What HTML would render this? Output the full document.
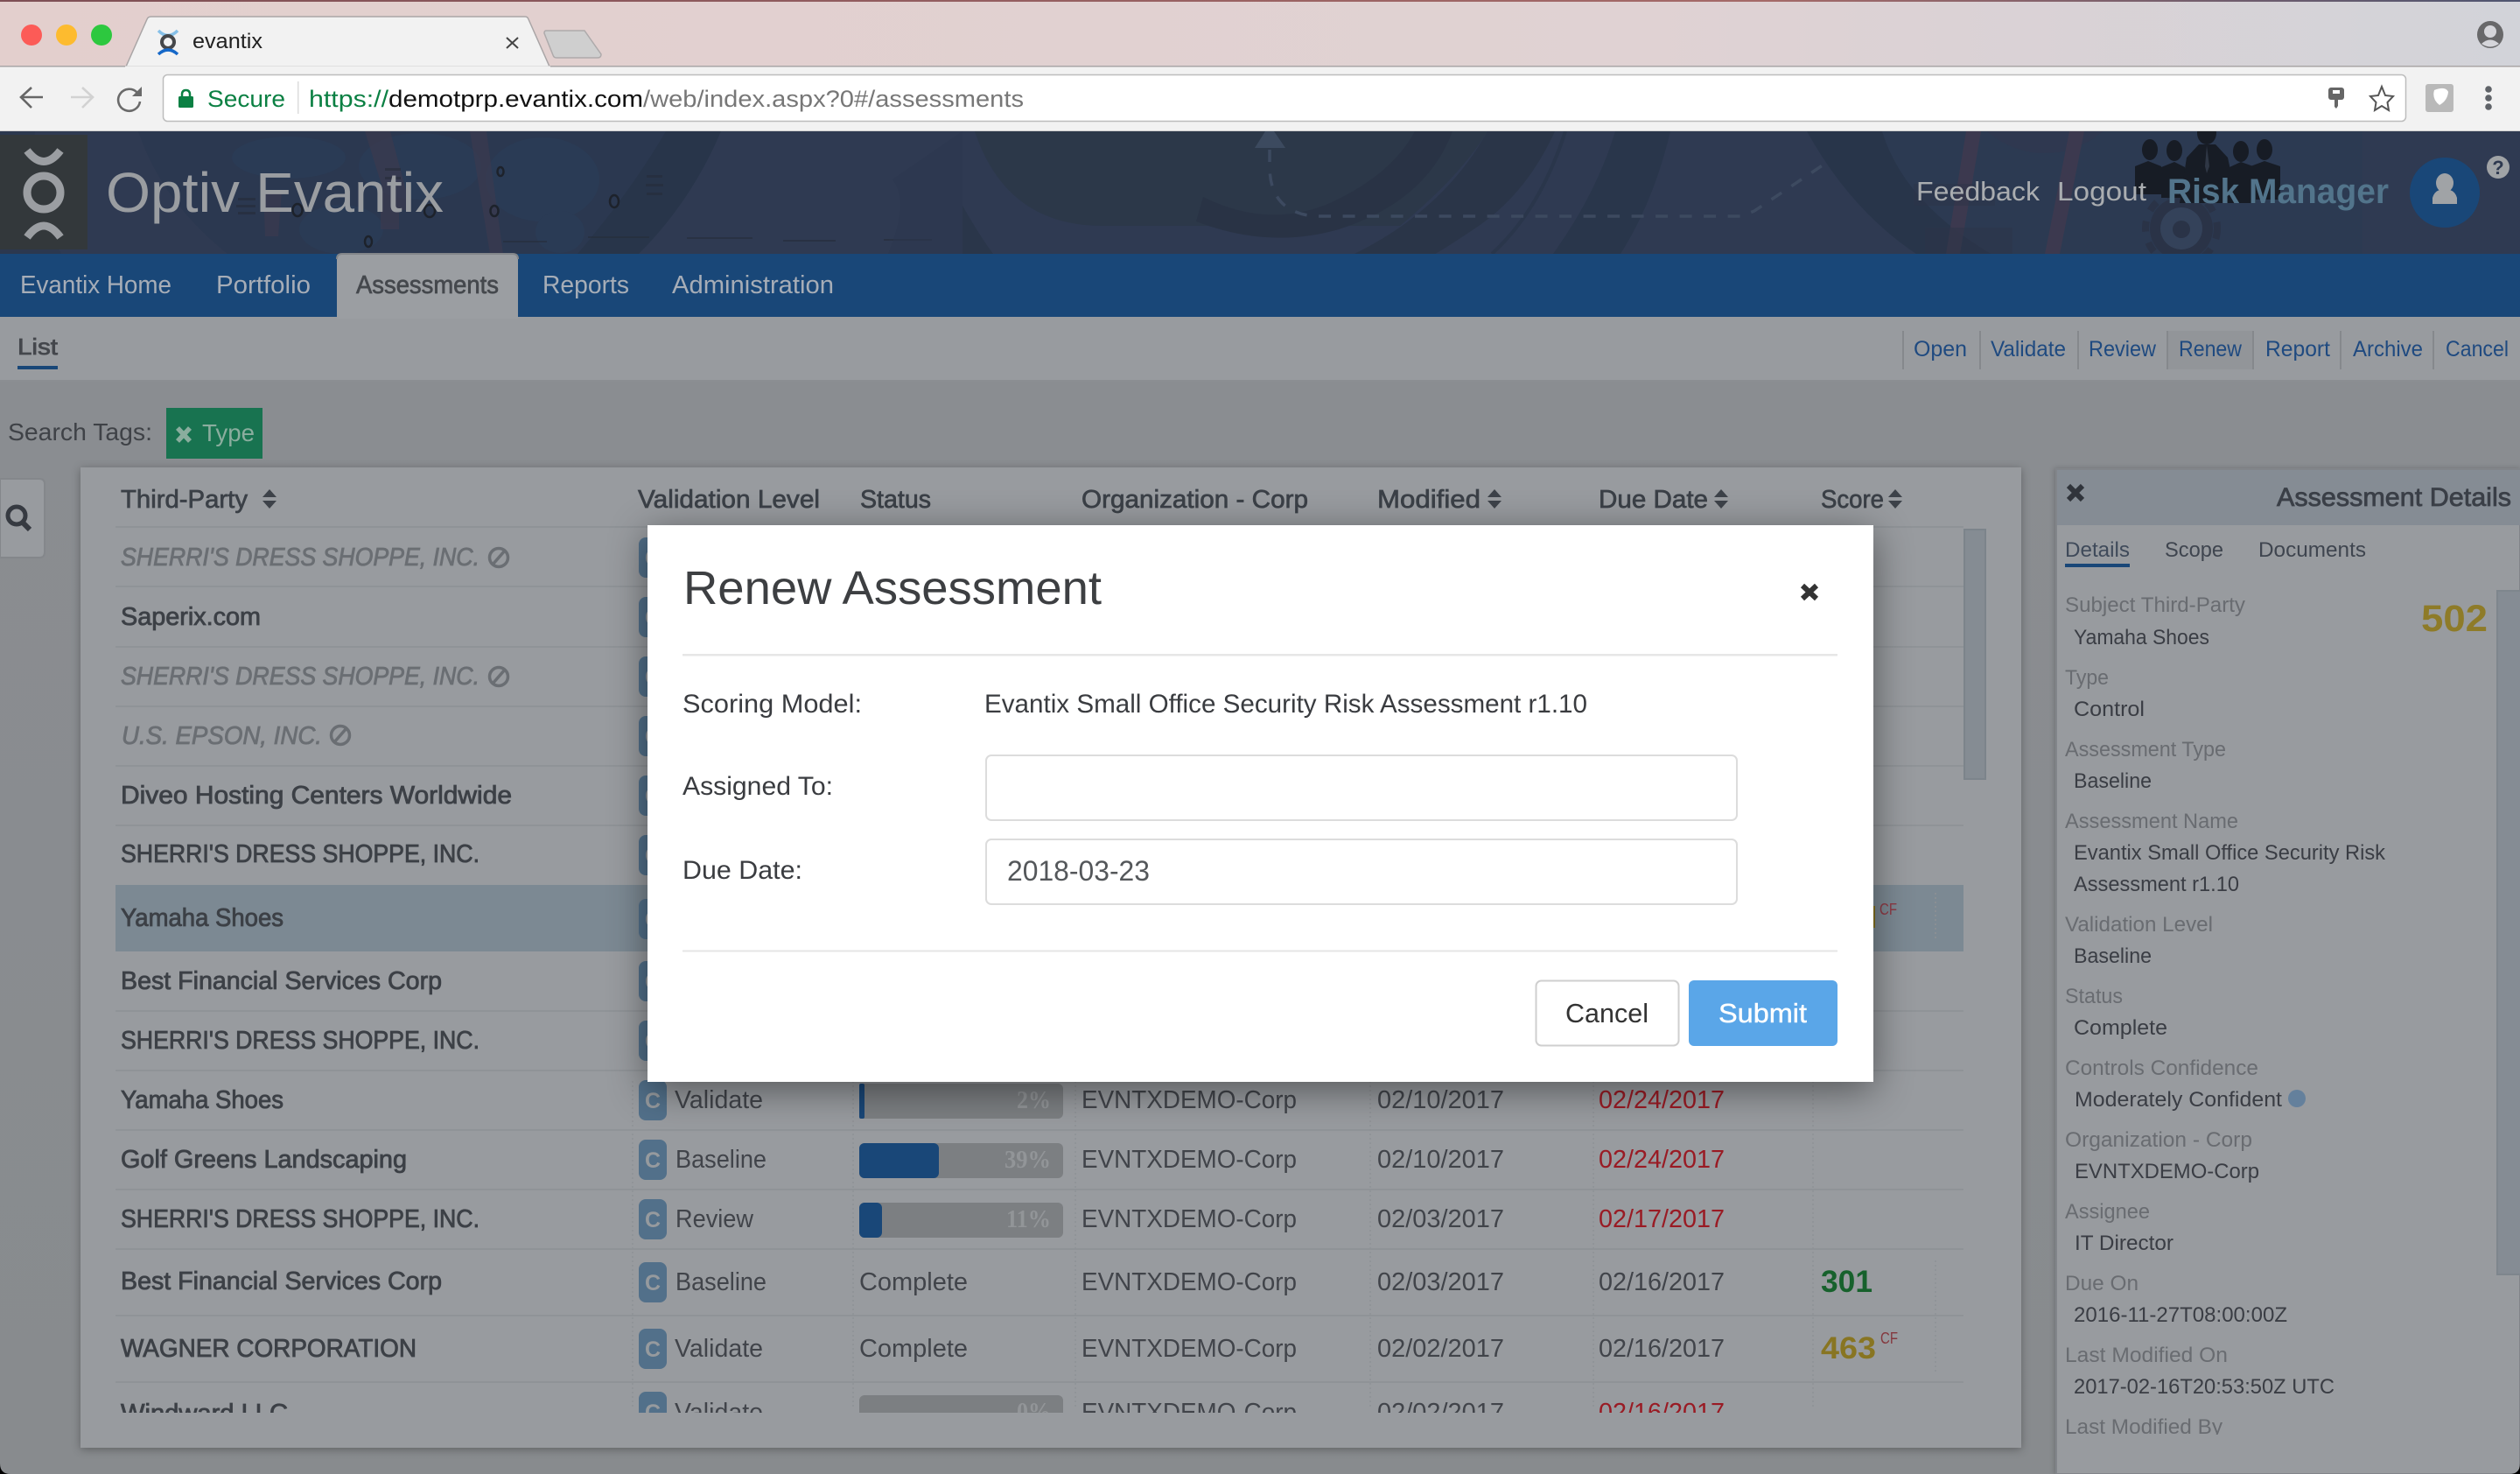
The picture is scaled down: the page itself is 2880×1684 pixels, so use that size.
<!DOCTYPE html>
<html><head><meta charset="utf-8"><title>evantix</title>
<style>
html,body{margin:0;padding:0;background:#8c8f93;width:2880px;height:1684px;overflow:hidden}
svg{display:block;position:absolute;left:0;top:0}
text{font-family:"Liberation Sans",sans-serif;font-size:29px;white-space:pre}
.nav{fill:#a6adb7;font-size:29px}
.act{fill:#1f4a80;font-size:25px}
.n{fill:#3c4046;stroke:#3c4046;stroke-width:.85px}
.i{fill:#6a6e73;stroke:#6a6e73;stroke-width:.85px;font-style:italic}
.h{fill:#3b4047;stroke:#3b4047;stroke-width:.7px}
.t{fill:#41444a}
.r{fill:#991b24}
.c{fill:#969a9e;font-size:25px;font-weight:bold;text-anchor:middle}
.p{fill:#929598;font-family:"Liberation Serif",serif;font-weight:bold;font-size:28px}
.l{fill:#696c71;font-size:24px}
.v{fill:#3a3d44;font-size:24px}
.m{fill:#3a3c40;font-size:30px}
.sep{stroke:#8f9397;stroke-width:2}
.dot{stroke:#8e9195;stroke-width:1.5;stroke-dasharray:2 3}
</style></head><body>
<svg xmlns="http://www.w3.org/2000/svg" width="2880" height="1684" viewBox="0 0 2880 1684">
<defs>
<linearGradient id="tb" x1="0" x2="1" y1="0" y2="0"><stop offset="0" stop-color="#e3cfcd"/><stop offset=".65" stop-color="#e0d2d3"/><stop offset="1" stop-color="#d2d3d9"/></linearGradient>
<linearGradient id="ts" x1="0" x2="1" y1="0" y2="0"><stop offset="0" stop-color="#7e4f55"/><stop offset=".7" stop-color="#a56a68"/><stop offset="1" stop-color="#4f5570"/></linearGradient>
<linearGradient id="bg" x1="0" x2="0" y1="0" y2="1"><stop offset="0" stop-color="#8a8d91"/><stop offset="1" stop-color="#888b8e"/></linearGradient>
<clipPath id="hd"><rect x="0" y="150" width="2880" height="140"/></clipPath>
<clipPath id="tbl"><rect x="92" y="534" width="2218" height="1080"/></clipPath>
<clipPath id="det"><rect x="2350" y="600" width="530" height="1039"/></clipPath>
</defs>

<!-- browser chrome -->
<rect width="2880" height="76" fill="url(#tb)"/>
<rect width="2880" height="2" fill="url(#ts)"/>
<rect y="75" width="2880" height="75" fill="#f2f2f2"/>
<rect y="75" width="2880" height="1.5" fill="#a9a5a6"/>
<rect y="149" width="2880" height="1.5" fill="#cfcfcf"/>
<circle cx="36" cy="40" r="12" fill="#fc5b57"/><circle cx="76" cy="40" r="12" fill="#fdbb2f"/><circle cx="116" cy="40" r="12" fill="#2dc83f"/>
<path d="M144 76 L168 22 Q169 19 173 19 H600 Q603 19 604 22 L628 76Z" fill="#f2f2f2" stroke="#a9a5a6" stroke-width="1.5"/>
<rect x="143" y="75.5" width="486" height="3" fill="#f2f2f2"/>
<path d="M181 35 Q192 46 203 35" fill="none" stroke="#86c0e8" stroke-width="3.5"/>
<circle cx="192" cy="48" r="7" fill="none" stroke="#45474a" stroke-width="4"/>
<path d="M181 62 Q192 52 203 62" fill="none" stroke="#1668c8" stroke-width="3.5"/>
<text x="220" y="55" style="font-size:24px;fill:#222" textLength="80" lengthAdjust="spacingAndGlyphs">evantix</text>
<path d="M579 43 L592 55 M592 43 L579 55" stroke="#444" stroke-width="2"/>
<path d="M624 35 H668 L687 62 Q687 66 683 66 H636 Q633 66 632 63 L622 38 Q622 35 624 35Z" fill="#cfcfcf" stroke="#aeaaab" stroke-width="1.5"/>
<path d="M49 111 H25 M36 100 L24 111 L36 123" fill="none" stroke="#666" stroke-width="2.600"/>
<path d="M105 111 H81 M94 100 L106 111 L94 123" fill="none" stroke="#d2d2d2" stroke-width="2.600"/>
<path d="M157 106 A12.500 12.500 0 1 0 160 116" fill="none" stroke="#6a6a6a" stroke-width="2.600"/>
<path d="M162 99 V110 H151Z" fill="#6a6a6a"/>
<rect x="186.500" y="85.500" width="2563" height="53" rx="5" fill="#fff" stroke="#bdbdbd" stroke-width="1.500"/>
<rect x="340" y="93" width="1.500" height="37" fill="#dcdcdc"/>
<path d="M208 111 V108 Q208 103 212.500 103 Q217 103 217 108 V111" fill="none" stroke="#0b8043" stroke-width="2.500"/>
<rect x="204" y="110" width="17" height="13" rx="1.500" fill="#0b8043"/>
<text x="237" y="122" style="font-size:27px;fill:#0b8043" textLength="89" lengthAdjust="spacingAndGlyphs">Secure</text>
<text x="353" y="122" style="font-size:27px;fill:#0b8043" textLength="91" lengthAdjust="spacingAndGlyphs">https://</text>
<text x="444" y="122" style="font-size:27px;fill:#111" textLength="291" lengthAdjust="spacingAndGlyphs">demotprp.evantix.com</text>
<text x="735" y="122" style="font-size:27px;fill:#777" textLength="435" lengthAdjust="spacingAndGlyphs">/web/index.aspx?0#/assessments</text>
<rect x="2661" y="100" width="18" height="14" rx="3" fill="#666"/><rect x="2666" y="103" width="8" height="4" fill="#fff"/><path d="M2668 113 H2672 V121 L2670 124 L2668 122Z" fill="#666"/>
<path d="M2722 99 L2726 109 L2735 110 L2728.500 117 L2730 126 L2722 121 L2714 126 L2715.500 117 L2709 110 L2718 109Z" fill="none" stroke="#555" stroke-width="2"/>
<rect x="2772" y="96" width="32" height="32" rx="3" fill="#b9b9b9"/><path d="M2782 103 Q2795 98 2798 105 Q2797 115 2788 120 Q2779 113 2782 103Z" fill="#fff"/>
<circle cx="2844" cy="102" r="3.800" fill="#5f6368"/><circle cx="2844" cy="112" r="3.800" fill="#5f6368"/><circle cx="2844" cy="122" r="3.800" fill="#5f6368"/>
<ellipse cx="2846" cy="39.500" rx="15" ry="15.500" fill="#68686a"/><circle cx="2846" cy="36" r="7" fill="#d5d5da"/><path d="M2836 50 Q2846 41 2856 50 Q2846 57 2836 50Z" fill="#d5d5da"/>

<!-- header -->
<rect y="150" width="2880" height="140" fill="#2f3a52"/>
<g clip-path="url(#hd)">
<!-- left globe -->
<path d="M158 150 Q185 230 260 290 H700 L761 150Z" fill="#2b3850"/>
<path d="M761 150 H824 Q790 230 730 290 H660 Q720 220 761 150Z" fill="#28354a"/>
<path d="M0 290 H70 Q30 220 40 150 H0Z" fill="#2c374e" opacity=".6"/>
<g fill="#2a3b55"><ellipse cx="330" cy="180" rx="65" ry="24"/><ellipse cx="480" cy="190" rx="70" ry="38"/><ellipse cx="390" cy="262" rx="48" ry="28"/><ellipse cx="620" cy="205" rx="65" ry="48"/><ellipse cx="640" cy="265" rx="28" ry="24"/></g>
<g fill="#3e3a4e" opacity=".6"><path d="M417 150 H446 L470 240 H445Z"/><path d="M537 150 H556 L575 290 H560Z"/><path d="M301 218 H322 L318 270 H303Z"/><path d="M435 212 H456 V262 H435Z"/></g>
<g fill="#252b38" opacity=".55"><rect x="272" y="226" width="20" height="3"/><rect x="270" y="234" width="22" height="3"/><rect x="272" y="242" width="20" height="3"/><rect x="440" y="192" width="18" height="3"/><rect x="440" y="202" width="18" height="3"/><rect x="739" y="200" width="18" height="3"/><rect x="738" y="210" width="20" height="3"/><rect x="739" y="220" width="18" height="3"/><rect x="575" y="275" width="50" height="2"/><rect x="672" y="270" width="70" height="2"/><rect x="785" y="271" width="75" height="2"/><rect x="895" y="274" width="60" height="2"/><rect x="1010" y="273" width="55" height="2"/></g>
<path d="M1015 290 Q1040 230 1020 205 L1100 150 V290Z" fill="#2b364d" opacity=".5"/>
<!-- centre shapes -->
<path d="M1114 150 Q1150 258 1260 258 H1600 Q1670 200 1700 150Z" fill="#2c3849"/>
<path d="M1375 225 Q1450 262 1520 232 Q1590 200 1617 150 H1660 Q1630 230 1530 262 Q1450 285 1367 253Z" fill="#293345"/>
<path d="M1100 235 Q1120 270 1135 290 H1100Z" fill="#2a364a"/>
<path d="M1700 150 H1777 Q1745 220 1690 258 Q1650 285 1640 290 H1548 Q1650 240 1700 150Z" fill="#2a3548"/>
<path d="M1846 150 H1909 Q1890 230 1852 290 H1775 Q1825 220 1846 150Z" fill="#29364b"/>
<path d="M1789 150 Q1760 240 1705 290" fill="none" stroke="#2a364b" stroke-width="4"/>
<path d="M1434 169 L1446 150 H1456 L1469 169Z" fill="#3c4a5f"/>
<path d="M1451 171 V190 Q1451 222 1470 236 Q1485 247 1508 247 H1990 L2005 241 L2129 158" fill="none" stroke="#3d4a60" stroke-width="3.500" stroke-dasharray="14 13.500"/>
<!-- right ring -->
<path d="M2065 150 H2151 Q2175 230 2275 290 H2190 Q2115 240 2065 150Z" fill="#28354a"/>
<path d="M2151 150 H2700 V290 H2275 Q2175 230 2151 150Z" fill="#2a3a52" opacity=".55"/>
<circle cx="2337" cy="75" r="100" fill="#2f3850"/>
<g fill="#41394f" opacity=".75"><path d="M2247 150 H2264 L2240 290 H2224Z"/><path d="M2365 150 H2382 L2354 290 H2337Z"/></g>
<path d="M2187 210 H2280 V235 H2187Z M2200 260 H2300 V290 H2200Z" fill="#2b3347" opacity=".5"/>
<!-- gear -->
<circle cx="2493" cy="261" r="36" fill="#2a3347"/>
<circle cx="2493" cy="261" r="41" fill="none" stroke="#2a3347" stroke-width="8" stroke-dasharray="12 13"/>
<circle cx="2493" cy="261" r="24" fill="#34425a"/>
<circle cx="2493" cy="262" r="10" fill="#2a3347"/>
<!-- people -->
<g fill="#171c25">
<ellipse cx="2457" cy="171" rx="9" ry="12"/><path d="M2440 190 L2455 184 L2470 190 V222 H2440Z"/>
<ellipse cx="2485" cy="172" rx="9" ry="12"/><path d="M2470 191 L2485 185 L2497 191 V226 H2470Z"/>
<ellipse cx="2522" cy="152" rx="11" ry="13"/><path d="M2491 232 L2499 180 L2513 165 H2532 L2546 180 L2557 232Z"/>
<ellipse cx="2561" cy="173" rx="9" ry="12"/><path d="M2548 191 L2561 185 L2578 191 V232 H2548Z"/>
<ellipse cx="2588" cy="171" rx="9" ry="12"/><path d="M2572 190 L2588 184 L2606 190 V228 H2572Z"/>
</g>
<path d="M2522 166 L2520 190 L2522 198 L2525 190Z" fill="#2f3745"/>
</g>
<rect x="0" y="154" width="100" height="131" fill="#33383b"/>
<path d="M31 172 Q50 197 69 172" fill="none" stroke="#9b9ea2" stroke-width="9"/>
<circle cx="50" cy="220" r="19" fill="none" stroke="#9b9ea2" stroke-width="9"/>
<path d="M31 271 Q50 245 69 271" fill="none" stroke="#9b9ea2" stroke-width="9"/>
<g fill="none" stroke="#1d222b" stroke-width="2.500"><ellipse cx="572" cy="196" rx="3.500" ry="5"/><ellipse cx="702" cy="230" rx="5" ry="7"/><ellipse cx="565" cy="241" rx="4.500" ry="6"/><ellipse cx="340" cy="240" rx="5.500" ry="7"/><ellipse cx="491" cy="241" rx="6" ry="7"/><ellipse cx="421" cy="276" rx="4" ry="6"/></g>
<text x="121" y="242" style="font-size:64px;fill:#9a9da1" textLength="386" lengthAdjust="spacingAndGlyphs">Optiv Evantix</text>
<text x="2190" y="229" style="font-size:31px;fill:#aaadb0" textLength="141" lengthAdjust="spacingAndGlyphs">Feedback</text>
<text x="2351" y="229" style="font-size:31px;fill:#aaadb0" textLength="102" lengthAdjust="spacingAndGlyphs">Logout</text>
<text x="2477" y="232" style="font-size:40px;fill:#52748b;font-weight:bold" textLength="253" lengthAdjust="spacingAndGlyphs">Risk Manager</text>
<ellipse cx="2794" cy="220" rx="40" ry="40" fill="#194778"/>
<ellipse cx="2794" cy="209" rx="10" ry="11" fill="#a0a3a6"/><path d="M2780 233 V226 Q2782 219 2788 217 Q2794 222 2800 217 Q2806 219 2808 226 V233 Z" fill="#a0a3a6"/>
<circle cx="2855" cy="191" r="13" fill="#a0a3a6"/>
<text x="2855" y="199" text-anchor="middle" style="font-size:22px;font-weight:bold;fill:#2e3950">?</text>

<!-- nav -->
<rect y="290" width="2880" height="72" fill="#194778"/>
<text class="nav" x="23" y="335" textLength="173" lengthAdjust="spacingAndGlyphs">Evantix Home</text>
<text class="nav" x="247" y="335" textLength="108" lengthAdjust="spacingAndGlyphs">Portfolio</text>
<path d="M385 364 V296 Q385 290 391 290 H586 Q592 290 592 296 V364Z" fill="#9b9ea2"/>
<path d="M385 296 Q385 290 391 290 H586 Q592 290 592 296" fill="none" stroke="#83868a" stroke-width="2"/>
<text x="407" y="335" style="font-size:29px;fill:#45484d;stroke:#45484d;stroke-width:.7" textLength="163" lengthAdjust="spacingAndGlyphs">Assessments</text>
<text class="nav" x="620" y="335" textLength="99" lengthAdjust="spacingAndGlyphs">Reports</text>
<text class="nav" x="768" y="335" textLength="185" lengthAdjust="spacingAndGlyphs">Administration</text>

<!-- sub nav -->
<rect y="362" width="2880" height="72" fill="#989b9f"/>
<rect x="385" y="362" width="207" height="2" fill="#9b9ea2"/>
<rect y="434" width="2880" height="2" fill="#8b8e92"/>
<rect y="436" width="2880" height="1248" fill="url(#bg)"/>
<text x="20" y="405" style="font-size:26px;fill:#44474c;stroke:#44474c;stroke-width:.8" textLength="46" lengthAdjust="spacingAndGlyphs">List</text>
<rect x="20" y="418" width="46" height="4" fill="#194778"/>
<rect x="2477" y="378" width="98" height="44" fill="#929599"/>
<g fill="#85888c"><rect x="2174" y="378" width="2" height="44"/><rect x="2262" y="378" width="2" height="44"/><rect x="2374" y="378" width="2" height="44"/><rect x="2476" y="378" width="2" height="44"/><rect x="2574" y="378" width="2" height="44"/><rect x="2674" y="378" width="2" height="44"/><rect x="2780" y="378" width="2" height="44"/></g>
<text class="act" x="2187" y="407" textLength="61" lengthAdjust="spacingAndGlyphs">Open</text>
<text class="act" x="2275" y="407" textLength="86" lengthAdjust="spacingAndGlyphs">Validate</text>
<text class="act" x="2387" y="407" textLength="77" lengthAdjust="spacingAndGlyphs">Review</text>
<text class="act" x="2490" y="407" textLength="72" lengthAdjust="spacingAndGlyphs">Renew</text>
<text class="act" x="2589" y="407" textLength="74" lengthAdjust="spacingAndGlyphs">Report</text>
<text class="act" x="2689" y="407" textLength="80" lengthAdjust="spacingAndGlyphs">Archive</text>
<text class="act" x="2795" y="407" textLength="72" lengthAdjust="spacingAndGlyphs">Cancel</text>

<!-- search tags -->
<text x="9" y="503" style="font-size:28px;fill:#3f4247" textLength="165" lengthAdjust="spacingAndGlyphs">Search Tags:</text>
<rect x="190" y="466" width="110" height="58" fill="#187350"/>
<path d="M203 489 L217 504 M217 489 L203 504" stroke="#8aad9e" stroke-width="5.500"/>
<text x="231" y="504" style="font-size:28px;fill:#8aad9e" textLength="60" lengthAdjust="spacingAndGlyphs">Type</text>
<path d="M0 547 H45 Q51 547 51 553 V631 Q51 637 45 637 H0Z" fill="#989b9f" stroke="#84878b" stroke-width="2"/>
<circle cx="19" cy="589" r="10" fill="none" stroke="#363a41" stroke-width="5"/><path d="M26 597 L34 605" stroke="#363a41" stroke-width="6"/>

<!-- main panel -->
<rect x="92" y="534" width="2218" height="1120" fill="#989b9f" style="filter:drop-shadow(0 2px 5px rgba(0,0,0,.3))"/>
<text class="h" x="138" y="580" textLength="145" lengthAdjust="spacingAndGlyphs">Third-Party</text>
<path d="M300 568 L308 559 L316 568Z M300 572 L308 581 L316 572Z" fill="#3d4249"/>
<text class="h" x="729" y="580" textLength="208" lengthAdjust="spacingAndGlyphs">Validation Level</text>
<text class="h" x="983" y="580" textLength="81" lengthAdjust="spacingAndGlyphs">Status</text>
<text class="h" x="1236" y="580" textLength="259" lengthAdjust="spacingAndGlyphs">Organization - Corp</text>
<text class="h" x="1574" y="580" textLength="118" lengthAdjust="spacingAndGlyphs">Modified</text>
<path d="M1700 568 L1708 559 L1716 568Z M1700 572 L1708 581 L1716 572Z" fill="#3d4249"/>
<text class="h" x="1827" y="580" textLength="125" lengthAdjust="spacingAndGlyphs">Due Date</text>
<path d="M1959 568 L1967 559 L1975 568Z M1959 572 L1967 581 L1975 572Z" fill="#3d4249"/>
<text class="h" x="2081" y="580" textLength="72" lengthAdjust="spacingAndGlyphs">Score</text>
<path d="M2158 568 L2166 559 L2174 568Z M2158 572 L2166 581 L2174 572Z" fill="#3d4249"/>

<g class="sep"><line x1="132" x2="2244" y1="602" y2="602"/><line x1="132" x2="2244" y1="670" y2="670"/><line x1="132" x2="2244" y1="739" y2="739"/><line x1="132" x2="2244" y1="807" y2="807"/><line x1="132" x2="2244" y1="875" y2="875"/><line x1="132" x2="2244" y1="943" y2="943"/><line x1="132" x2="2244" y1="1155" y2="1155"/><line x1="132" x2="2244" y1="1223" y2="1223"/><line x1="132" x2="2244" y1="1291" y2="1291"/><line x1="132" x2="2244" y1="1359" y2="1359"/><line x1="132" x2="2244" y1="1427" y2="1427"/><line x1="132" x2="2244" y1="1503" y2="1503"/><line x1="132" x2="2244" y1="1579" y2="1579"/></g>
<rect x="132" y="1011" width="2112" height="76" fill="#7c8993"/>
<rect x="2245" y="605" width="24" height="285" fill="#858c93" stroke="#7c848b" stroke-width="2"/>

<g clip-path="url(#tbl)">
<g class="dot"><line x1="723" x2="723" y1="1235" y2="1610"/><line x1="975" x2="975" y1="1235" y2="1610"/><line x1="1229" x2="1229" y1="1235" y2="1610"/><line x1="1566" x2="1566" y1="1235" y2="1610"/><line x1="1821" x2="1821" y1="1235" y2="1610"/><line x1="2072" x2="2072" y1="1235" y2="1610"/><line x1="2212" x2="2212" y1="1440" y2="1570"/><line x1="2212" x2="2212" y1="1020" y2="1075"/></g>
<g fill="#52708a">
<rect x="730" y="614" width="32" height="46" rx="8"/><rect x="730" y="682" width="32" height="46" rx="8"/><rect x="730" y="750" width="32" height="46" rx="8"/><rect x="730" y="818" width="32" height="46" rx="8"/><rect x="730" y="886" width="32" height="46" rx="8"/><rect x="730" y="954" width="32" height="46" rx="8"/><rect x="730" y="1027" width="32" height="46" rx="8"/><rect x="730" y="1098" width="32" height="46" rx="8"/><rect x="730" y="1166" width="32" height="46" rx="8"/><rect x="730" y="1234" width="32" height="46" rx="8"/><rect x="730" y="1302" width="32" height="46" rx="8"/><rect x="730" y="1370" width="32" height="46" rx="8"/><rect x="730" y="1442" width="32" height="46" rx="8"/><rect x="730" y="1518" width="32" height="46" rx="8"/><rect x="730" y="1590" width="32" height="46" rx="8"/>
</g>
<text class="c" x="746" y="646">C</text><text class="c" x="746" y="714">C</text><text class="c" x="746" y="782">C</text><text class="c" x="746" y="850">C</text><text class="c" x="746" y="918">C</text><text class="c" x="746" y="986">C</text><text class="c" x="746" y="1059">C</text><text class="c" x="746" y="1130">C</text><text class="c" x="746" y="1198">C</text><text class="c" x="746" y="1266">C</text><text class="c" x="746" y="1334">C</text><text class="c" x="746" y="1402">C</text><text class="c" x="746" y="1474">C</text><text class="c" x="746" y="1550">C</text><text class="c" x="746" y="1622">C</text>

<!-- names -->
<text class="i" x="138" y="646" textLength="410" lengthAdjust="spacingAndGlyphs">SHERRI'S DRESS SHOPPE, INC.</text>
<text class="n" x="138" y="714" textLength="160" lengthAdjust="spacingAndGlyphs">Saperix.com</text>
<text class="i" x="138" y="782" textLength="410" lengthAdjust="spacingAndGlyphs">SHERRI'S DRESS SHOPPE, INC.</text>
<text class="i" x="139" y="850" textLength="229" lengthAdjust="spacingAndGlyphs">U.S. EPSON, INC.</text>
<text class="n" x="138" y="918" textLength="447" lengthAdjust="spacingAndGlyphs">Diveo Hosting Centers Worldwide</text>
<text class="n" x="138" y="985" textLength="410" lengthAdjust="spacingAndGlyphs">SHERRI'S DRESS SHOPPE, INC.</text>
<text class="n" x="138" y="1058" textLength="186" lengthAdjust="spacingAndGlyphs">Yamaha Shoes</text>
<text class="n" x="138" y="1130" textLength="367" lengthAdjust="spacingAndGlyphs">Best Financial Services Corp</text>
<text class="n" x="138" y="1198" textLength="410" lengthAdjust="spacingAndGlyphs">SHERRI'S DRESS SHOPPE, INC.</text>
<text class="n" x="138" y="1266" textLength="186" lengthAdjust="spacingAndGlyphs">Yamaha Shoes</text>
<text class="n" x="138" y="1334" textLength="327" lengthAdjust="spacingAndGlyphs">Golf Greens Landscaping</text>
<text class="n" x="138" y="1402" textLength="410" lengthAdjust="spacingAndGlyphs">SHERRI'S DRESS SHOPPE, INC.</text>
<text class="n" x="138" y="1473" textLength="367" lengthAdjust="spacingAndGlyphs">Best Financial Services Corp</text>
<text class="n" x="138" y="1550" textLength="338" lengthAdjust="spacingAndGlyphs">WAGNER CORPORATION</text>
<text class="n" x="138" y="1624" textLength="191" lengthAdjust="spacingAndGlyphs">Windward LLC</text>
<g fill="none" stroke="#6a6e73" stroke-width="3.500">
<circle cx="570" cy="637" r="10.500"/><path d="M563 645 L577 629"/>
<circle cx="570" cy="773" r="10.500"/><path d="M563 781 L577 765"/>
<circle cx="389" cy="840" r="10.500"/><path d="M382 848 L396 832"/>
</g>

<!-- rows bottom -->
<g fill="#7c7f82"><rect x="982" y="1238" width="233" height="40" rx="6"/><rect x="982" y="1306" width="233" height="40" rx="6"/><rect x="982" y="1374" width="233" height="40" rx="6"/><rect x="982" y="1594" width="233" height="40" rx="6"/></g>
<g fill="#194778"><rect x="982" y="1238" width="6" height="40" rx="2"/><rect x="982" y="1306" width="91" height="40" rx="6"/><rect x="982" y="1374" width="26" height="40" rx="6"/></g>
<text class="p" x="1162" y="1266" textLength="39" lengthAdjust="spacingAndGlyphs">2%</text>
<text class="p" x="1148" y="1334" textLength="53" lengthAdjust="spacingAndGlyphs">39%</text>
<text class="p" x="1150" y="1402" textLength="51" lengthAdjust="spacingAndGlyphs">11%</text>
<text class="p" x="1162" y="1622" textLength="39" lengthAdjust="spacingAndGlyphs">0%</text>

<text class="t" x="771" y="1266" textLength="101" lengthAdjust="spacingAndGlyphs">Validate</text>
<text class="t" x="772" y="1334" textLength="104" lengthAdjust="spacingAndGlyphs">Baseline</text>
<text class="t" x="772" y="1402" textLength="89" lengthAdjust="spacingAndGlyphs">Review</text>
<text class="t" x="772" y="1474" textLength="104" lengthAdjust="spacingAndGlyphs">Baseline</text>
<text class="t" x="771" y="1550" textLength="101" lengthAdjust="spacingAndGlyphs">Validate</text>
<text class="t" x="771" y="1623" textLength="101" lengthAdjust="spacingAndGlyphs">Validate</text>
<text class="t" x="982" y="1474" textLength="124" lengthAdjust="spacingAndGlyphs">Complete</text>
<text class="t" x="982" y="1550" textLength="124" lengthAdjust="spacingAndGlyphs">Complete</text>

<text class="t" x="1236" y="1266" textLength="246" lengthAdjust="spacingAndGlyphs">EVNTXDEMO-Corp</text>
<text class="t" x="1236" y="1334" textLength="246" lengthAdjust="spacingAndGlyphs">EVNTXDEMO-Corp</text>
<text class="t" x="1236" y="1402" textLength="246" lengthAdjust="spacingAndGlyphs">EVNTXDEMO-Corp</text>
<text class="t" x="1236" y="1474" textLength="246" lengthAdjust="spacingAndGlyphs">EVNTXDEMO-Corp</text>
<text class="t" x="1236" y="1550" textLength="246" lengthAdjust="spacingAndGlyphs">EVNTXDEMO-Corp</text>
<text class="t" x="1236" y="1623" textLength="246" lengthAdjust="spacingAndGlyphs">EVNTXDEMO-Corp</text>

<text class="t" x="1574" y="1266" textLength="145" lengthAdjust="spacingAndGlyphs">02/10/2017</text>
<text class="t" x="1574" y="1334" textLength="145" lengthAdjust="spacingAndGlyphs">02/10/2017</text>
<text class="t" x="1574" y="1402" textLength="145" lengthAdjust="spacingAndGlyphs">02/03/2017</text>
<text class="t" x="1574" y="1474" textLength="145" lengthAdjust="spacingAndGlyphs">02/03/2017</text>
<text class="t" x="1574" y="1550" textLength="145" lengthAdjust="spacingAndGlyphs">02/02/2017</text>
<text class="t" x="1574" y="1623" textLength="145" lengthAdjust="spacingAndGlyphs">02/02/2017</text>

<text class="r" x="1827" y="1266" textLength="144" lengthAdjust="spacingAndGlyphs">02/24/2017</text>
<text class="r" x="1827" y="1334" textLength="144" lengthAdjust="spacingAndGlyphs">02/24/2017</text>
<text class="r" x="1827" y="1402" textLength="144" lengthAdjust="spacingAndGlyphs">02/17/2017</text>
<text class="t" x="1827" y="1474" textLength="144" lengthAdjust="spacingAndGlyphs">02/16/2017</text>
<text class="t" x="1827" y="1550" textLength="144" lengthAdjust="spacingAndGlyphs">02/16/2017</text>
<text class="r" x="1827" y="1623" textLength="144" lengthAdjust="spacingAndGlyphs">02/16/2017</text>
</g>

<text x="2081" y="1476" style="font-size:35px;font-weight:bold;fill:#17612c" textLength="59" lengthAdjust="spacingAndGlyphs">301</text>
<text x="2081" y="1552" style="font-size:35px;font-weight:bold;fill:#887522" textLength="63" lengthAdjust="spacingAndGlyphs">463</text>
<text x="2149" y="1535" style="font-size:18px;fill:#84383e" textLength="20" lengthAdjust="spacingAndGlyphs">CF</text>
<rect x="2136" y="1035" width="7" height="25" fill="#887522"/>
<text x="2148" y="1045" style="font-size:18px;fill:#8f3a44" textLength="20" lengthAdjust="spacingAndGlyphs">CF</text>

<!-- details panel -->
<rect x="2350" y="536" width="530" height="1148" fill="#989b9f" stroke="#82858a" stroke-width="2" style="filter:drop-shadow(-1px 0 3px rgba(0,0,0,.2))"/>
<rect x="2351" y="537" width="529" height="63" fill="#858c94"/>
<path d="M2364 555 L2380 571 M2380 555 L2364 571" stroke="#30343b" stroke-width="6"/>
<text x="2602" y="578" style="font-size:30px;fill:#3a3f47;stroke:#3a3f47;stroke-width:.8" textLength="268" lengthAdjust="spacingAndGlyphs">Assessment Details</text>
<text x="2360" y="636" style="font-size:24px;fill:#3f4a5a" textLength="74" lengthAdjust="spacingAndGlyphs">Details</text>
<text x="2474" y="636" style="font-size:24px;fill:#3f454f" textLength="67" lengthAdjust="spacingAndGlyphs">Scope</text>
<text x="2581" y="636" style="font-size:24px;fill:#3f454f" textLength="123" lengthAdjust="spacingAndGlyphs">Documents</text>
<rect x="2360" y="644" width="74" height="4" fill="#194778"/>
<rect x="2854" y="675" width="28" height="781" fill="#858c94" stroke="#7e868d" stroke-width="2"/>
<text x="2767" y="721" style="font-size:43px;font-weight:bold;fill:#8e7b28" textLength="76" lengthAdjust="spacingAndGlyphs">502</text>
<g clip-path="url(#det)">
<text class="l" x="2360" y="699" textLength="206" lengthAdjust="spacingAndGlyphs">Subject Third-Party</text>
<text class="v" x="2370" y="736" textLength="155" lengthAdjust="spacingAndGlyphs">Yamaha Shoes</text>
<text class="l" x="2360" y="782" textLength="50" lengthAdjust="spacingAndGlyphs">Type</text>
<text class="v" x="2370" y="818" textLength="81" lengthAdjust="spacingAndGlyphs">Control</text>
<text class="l" x="2360" y="864" textLength="184" lengthAdjust="spacingAndGlyphs">Assessment Type</text>
<text class="v" x="2370" y="900" textLength="89" lengthAdjust="spacingAndGlyphs">Baseline</text>
<text class="l" x="2360" y="946" textLength="198" lengthAdjust="spacingAndGlyphs">Assessment Name</text>
<text class="v" x="2370" y="982" textLength="356" lengthAdjust="spacingAndGlyphs">Evantix Small Office Security Risk</text>
<text class="v" x="2370" y="1018" textLength="189" lengthAdjust="spacingAndGlyphs">Assessment r1.10</text>
<text class="l" x="2360" y="1064" textLength="169" lengthAdjust="spacingAndGlyphs">Validation Level</text>
<text class="v" x="2370" y="1100" textLength="89" lengthAdjust="spacingAndGlyphs">Baseline</text>
<text class="l" x="2360" y="1146" textLength="66" lengthAdjust="spacingAndGlyphs">Status</text>
<text class="v" x="2370" y="1182" textLength="107" lengthAdjust="spacingAndGlyphs">Complete</text>
<text class="l" x="2360" y="1228" textLength="221" lengthAdjust="spacingAndGlyphs">Controls Confidence</text>
<text class="v" x="2371" y="1264" textLength="237" lengthAdjust="spacingAndGlyphs">Moderately Confident</text>
<circle cx="2625" cy="1255" r="10" fill="#64809c"/>
<text class="l" x="2360" y="1310" textLength="214" lengthAdjust="spacingAndGlyphs">Organization - Corp</text>
<text class="v" x="2371" y="1346" textLength="211" lengthAdjust="spacingAndGlyphs">EVNTXDEMO-Corp</text>
<text class="l" x="2360" y="1392" textLength="97" lengthAdjust="spacingAndGlyphs">Assignee</text>
<text class="v" x="2371" y="1428" textLength="113" lengthAdjust="spacingAndGlyphs">IT Director</text>
<text class="l" x="2360" y="1474" textLength="84" lengthAdjust="spacingAndGlyphs">Due On</text>
<text class="v" x="2370" y="1510" textLength="244" lengthAdjust="spacingAndGlyphs">2016-11-27T08:00:00Z</text>
<text class="l" x="2360" y="1556" textLength="186" lengthAdjust="spacingAndGlyphs">Last Modified On</text>
<text class="v" x="2370" y="1592" textLength="298" lengthAdjust="spacingAndGlyphs">2017-02-16T20:53:50Z UTC</text>
<text class="l" x="2360" y="1638" textLength="180" lengthAdjust="spacingAndGlyphs">Last Modified By</text>
</g>

<!-- window corners -->
<path d="M0 1672 Q0 1684 12 1684 H0Z M2880 1672 Q2880 1684 2868 1684 H2880Z" fill="#000"/>

<!-- modal -->
<rect x="740" y="600" width="1401" height="636" fill="#fff" style="filter:drop-shadow(0 9px 22px rgba(0,0,0,.45))"/>
<text x="781" y="690" style="font-size:54px;fill:#3d3f42" textLength="478" lengthAdjust="spacingAndGlyphs">Renew Assessment</text>
<path d="M2060 669 L2076 684 M2076 669 L2060 684" stroke="#333" stroke-width="6"/>
<rect x="780" y="747" width="1320" height="2.500" fill="#e6e6e6"/>
<text class="m" x="780" y="814" textLength="205" lengthAdjust="spacingAndGlyphs">Scoring Model:</text>
<text class="m" x="1125" y="814" textLength="689" lengthAdjust="spacingAndGlyphs">Evantix Small Office Security Risk Assessment r1.10</text>
<text class="m" x="780" y="908" textLength="172" lengthAdjust="spacingAndGlyphs">Assigned To:</text>
<rect x="1127" y="863" width="858" height="74" rx="6" fill="#fff" stroke="#dcdcdc" stroke-width="2"/>
<text class="m" x="780" y="1004" textLength="137" lengthAdjust="spacingAndGlyphs">Due Date:</text>
<rect x="1127" y="959" width="858" height="74" rx="6" fill="#fff" stroke="#dcdcdc" stroke-width="2"/>
<text x="1151" y="1006" style="font-size:32px;fill:#54575a" textLength="163" lengthAdjust="spacingAndGlyphs">2018-03-23</text>
<rect x="780" y="1085.500" width="1320" height="2" fill="#e6e6e6"/>
<rect x="1755.500" y="1120.500" width="163" height="74" rx="6" fill="#fff" stroke="#cfcfcf" stroke-width="2"/>
<text x="1789" y="1168" style="font-size:31px;fill:#333" textLength="95" lengthAdjust="spacingAndGlyphs">Cancel</text>
<rect x="1930" y="1120" width="170" height="75" rx="6" fill="#5aa6e8"/>
<text x="1964" y="1168" style="font-size:31px;fill:#fff;stroke:#fff;stroke-width:.4" textLength="101" lengthAdjust="spacingAndGlyphs">Submit</text>
</svg>
</body></html>
